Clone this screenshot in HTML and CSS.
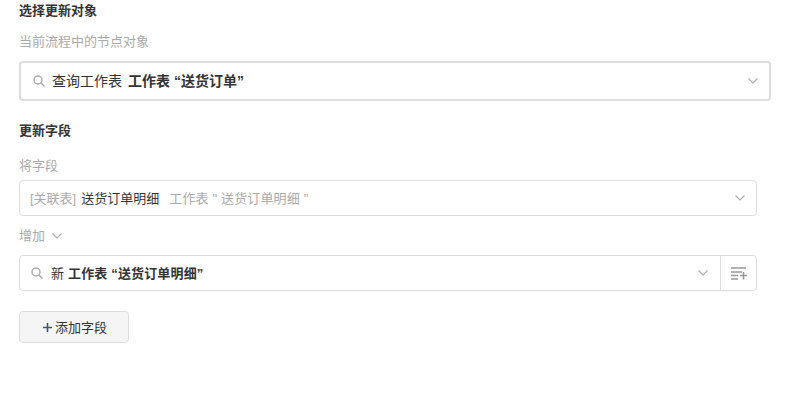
FILE: index.html
```html
<!DOCTYPE html>
<html lang="zh-CN">
<head>
    <meta charset="UTF-8">
    <meta name="viewport" content="width=device-width, initial-scale=1.0">
    <title>更新字段</title>
    <link rel="stylesheet" href="styles.css">
</head>
<body>
    <div class="panel">
        <h3 class="title">选择更新对象</h3>
        <div class="label label-first">当前流程中的节点对象</div>
        <div class="select select-focus">
            <svg class="search" viewBox="0 0 12 12"><circle cx="5" cy="5" r="4"/><path d="M8 8l3.500 3.500"/></svg>
            <span class="node row-text">查询工作表</span>
            <b class="target row-text">工作表 “送货订单”</b>
            <svg class="chevron" viewBox="0 0 10 6"><path d="M.5.5 5 5 9.5.5"/></svg>
        </div>

        <h3 class="title title-second">更新字段</h3>
        <div class="label label-field">将字段</div>
        <div class="select select-field">
            <span class="muted row-text">[关联表]</span>
            <span class="field-name row-text">送货订单明细</span>
            <span class="muted field-source row-text">工作表 " 送货订单明细 "</span>
            <svg class="chevron" viewBox="0 0 10 6"><path d="M.5.5 5 5 9.5.5"/></svg>
        </div>
        <div class="label label-op">增加
            <svg class="chevron-small" viewBox="0 0 10 6"><path d="M.5.5 5 5 9.5.5"/></svg>
        </div>
        <div class="select select-value">
            <div class="value-main">
                <svg class="search" viewBox="0 0 12 12"><circle cx="5" cy="5" r="4"/><path d="M8 8l3.500 3.500"/></svg>
                <span class="node-new row-text">新</span>
                <b class="row-text">工作表 “送货订单明细”</b>
                <svg class="chevron" viewBox="0 0 10 6"><path d="M.5.5 5 5 9.5.5"/></svg>
            </div>
            <div class="value-side">
                <svg class="list-add" viewBox="0 0 16 13"><path d="M0 1h15M0 5h11M0 8.500h7M0 12h7M9 8.500h7M12.500 5v7.500"/></svg>
            </div>
        </div>
        <button class="add-btn">
            <svg class="plus" viewBox="0 0 9 9"><path d="M0 4.500h9M4.500 0v9"/></svg>
            <span class="row-text">添加字段</span>
        </button>
    </div>
</body>
</html>
```
FILE: styles.css
```css
* { box-sizing: border-box; }
body { margin: 0; background: #fff; font-family: "Liberation Sans", "Noto Sans CJK SC", sans-serif; font-size: 13px; color: #333; }
.panel { padding: 3px 16px 0 19px; }
.title { margin: 0; font-size: 13px; line-height: 15px; font-weight: bold; color: #333; }
.title-second { margin-top: 22px; }
.label { color: #aaa; font-size: 13px; line-height: 15px; }
.label-first { margin-top: 16px; }
.label-field { margin-top: 20px; }
.label-op { margin-top: 12px; display: flex; align-items: center; gap: 7px; }
.select { display: flex; align-items: center; background: #fff; border: 1px solid #ddd; border-radius: 4px; width: 738px; height: 36px; }
.select-focus { width: 752px; height: 40px; margin-top: 12px; border: 2px solid #ddd; padding: 0 11px 0 12px; font-size: 14px; color: #333; }
.select-field { margin-top: 7px; padding: 0 11px 0 10px; }
.select-value { margin-top: 12px; }
.row-text { margin-bottom: 2px; }
.search { width: 12px; height: 12px; flex: none; fill: none; stroke: #aaa; stroke-width: 1.4; }
.node { margin-left: 7px; }
.target { margin-left: 6px; font-size: 14px; }
.chevron { width: 10px; height: 6px; flex: none; margin-left: auto; fill: none; stroke: #aaa; stroke-width: 1.1; }
.chevron-small { width: 10px; height: 6px; fill: none; stroke: #aaa; stroke-width: 1.1; }
.muted { color: #aaa; }
.field-name { margin-left: 5px; color: #333; }
.field-source { margin-left: 10px; letter-spacing: .15px; }
.value-main { flex: 1; display: flex; align-items: center; height: 100%; padding: 0 12px 0 11px; font-size: 14px; }
.value-main b { font-size: 13px; margin-left: 4px; letter-spacing: .15px; }
.node-new { margin-left: 8px; font-size: 13px; }
.value-side { width: 36px; height: 100%; flex: none; display: flex; align-items: center; justify-content: center; border-left: 1px solid #ddd; }
.list-add { width: 16px; height: 13px; fill: none; stroke: #999; stroke-width: 1.6; }
.add-btn { display: flex; align-items: center; justify-content: center; gap: 3px; width: 110px; height: 32px; margin-top: 20px; padding: 0 0 0 2px; background: #f5f5f5; border: 1px solid #ddd; border-radius: 4px; font-family: inherit; font-size: 13px; color: #333; }
.plus { width: 9px; height: 9px; flex: none; fill: none; stroke: #3a5a70; stroke-width: 1.6; }
```
